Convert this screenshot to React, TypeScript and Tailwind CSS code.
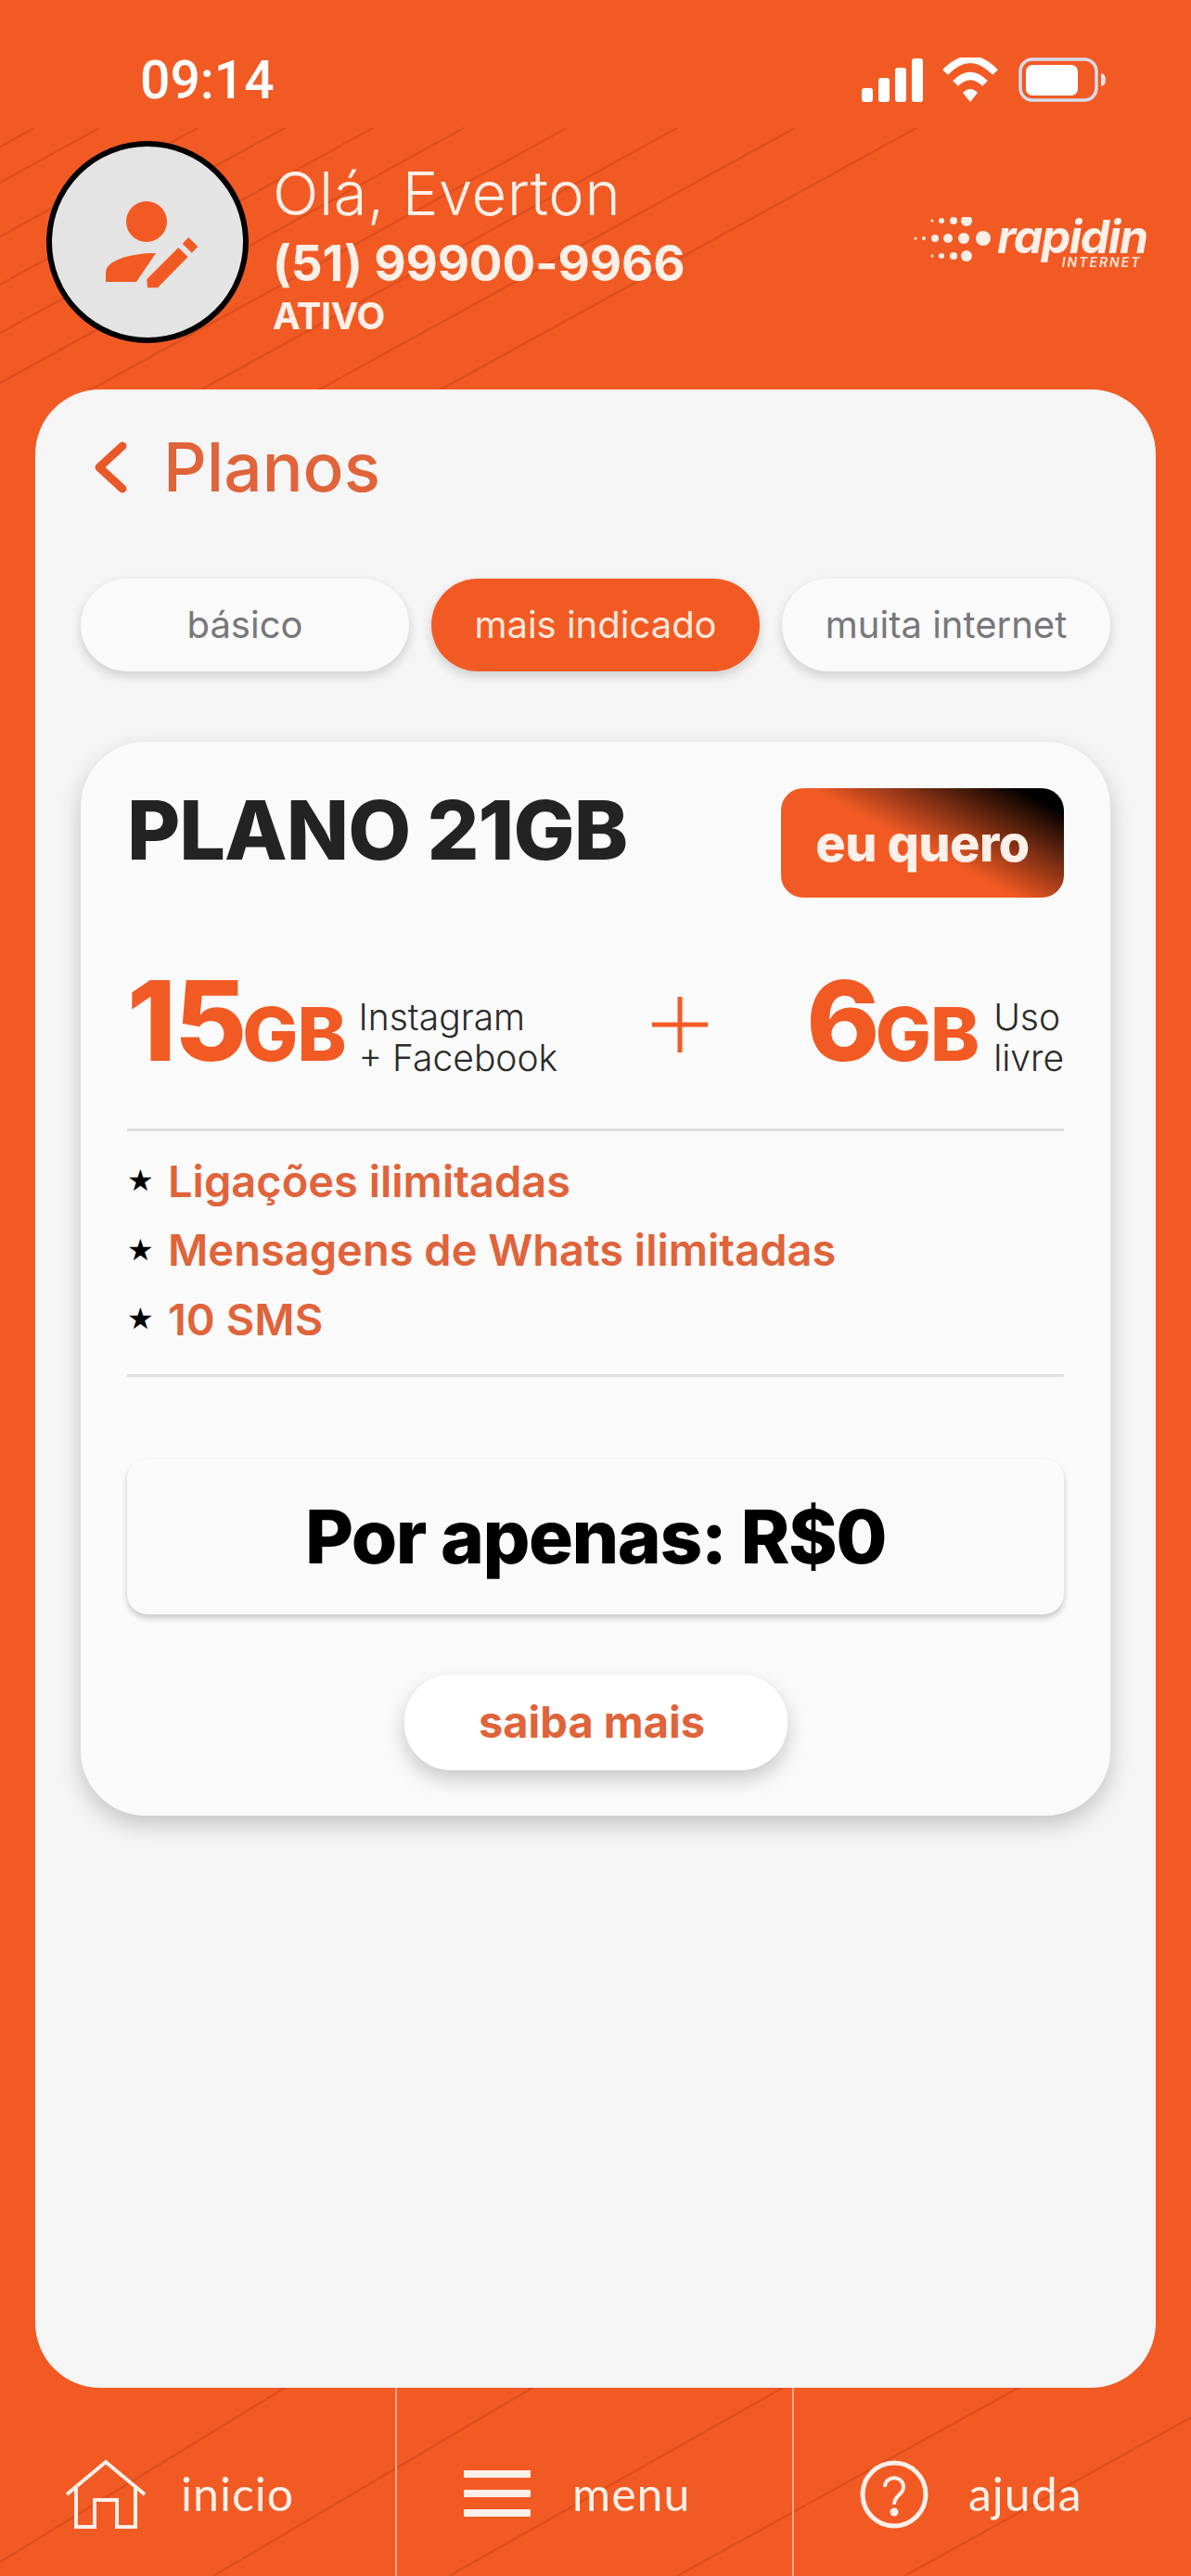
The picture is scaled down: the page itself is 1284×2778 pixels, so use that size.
const font = "font-['Inter','Liberation_Sans',sans-serif]";

const headerLines = [37, 107, 213, 307, 402, 500, 611, 730, 857, 988];
const footerLines = [
  [307, 2575, 0, 2763],
  [574, 2575, 230, 2778],
  [844, 2575, 484, 2778],
  [1098, 2575, 730, 2778],
  [1284, 2607, 975, 2778],
];

function BackgroundLines() {
  return (
    <svg className="absolute inset-0" width="1284" height="2778" viewBox="0 0 1284 2778" fill="none">
      {headerLines.map((x) => (
        <line key={x} x1={x} y1={138} x2={x - 520} y2={424} stroke="#dd4f1e" strokeWidth="2.5" />
      ))}
      {footerLines.map(([x1, y1, x2, y2]) => (
        <line key={x1} x1={x1} y1={y1} x2={x2} y2={y2} stroke="#dd4f1e" strokeWidth="2.5" />
      ))}
    </svg>
  );
}

function StatusBar() {
  return (
    <div className="flex h-[138px] shrink-0 items-start justify-between pl-[151px] pr-[92px] pt-[55px]">
      <span className="font-['Roboto',sans-serif] text-[57px] font-medium leading-[64px] text-white">09:14</span>
      <svg className="mt-[7px]" width="263" height="48" viewBox="929 62 263 48" fill="none">
        <rect x="929" y="95" width="12" height="15" rx="3" fill="#fff" />
        <rect x="947" y="84" width="12" height="26" rx="3" fill="#fff" />
        <rect x="965" y="73" width="12" height="37" rx="3" fill="#fff" />
        <rect x="983" y="63" width="12" height="47" rx="3" fill="#fff" />
        <path d="M1019 78 Q1046 50 1073 78" stroke="#fff" strokeWidth="8" />
        <path d="M1030 90 Q1046 74 1062 90" stroke="#fff" strokeWidth="8" />
        <path d="M1038 100 Q1046 92 1054 100 L1046 110 Z" fill="#fff" />
        <rect x="1100" y="64" width="82" height="44" rx="13" stroke="#d6dcec" strokeWidth="3.5" />
        <rect x="1106" y="70" width="56" height="33" rx="7" fill="#fff" />
        <path d="M1187 79 Q1192 80 1192 86 Q1192 92 1187 93 Z" fill="#e8e4e4" />
      </svg>
    </div>
  );
}

function Logo() {
  const dots = [
    [1005, 238, 1.5], [1015, 238, 3], [1028, 238, 4], [1042, 238, 6],
    [987, 257, 1.5], [996, 257, 2], [1008, 257, 4], [1022, 257, 5], [1039, 257, 6], [1060, 257, 8],
    [1005, 276, 1.5], [1015, 276, 3], [1028, 276, 4], [1042, 276, 6],
  ];
  return (
    <div className="ml-auto mr-[49px] mt-[82px] flex h-[66px] w-[250px] items-start">
      <svg className="shrink-0" width="86" height="48" viewBox="985 234 86 48">
        {dots.map(([cx, cy, r]) => (
          <circle key={`${cx}-${cy}`} cx={cx} cy={cy} r={r} fill="#fdeee6" />
        ))}
      </svg>
      <div className="ml-[4px] flex flex-col items-end">
        <span className={`${font} text-[50px] font-bold italic leading-[42px] tracking-[-1.5px] text-[#fdf0e8]`}>rapidin</span>
        <span className={`${font} mr-[6px] text-[14px] font-semibold italic leading-[14px] tracking-[2px] text-[#fde4d8]`}>INTERNET</span>
      </div>
    </div>
  );
}

function Header() {
  return (
    <div className="relative flex h-[282px] shrink-0 pl-[50px] pt-[14px]">
      <div className="flex h-[218px] w-[218px] shrink-0 items-center justify-center rounded-full border-[6px] border-black bg-[#e4e4e4]">
        <svg className="ml-[9px] mt-[6px]" width="117" height="94" viewBox="105 216 117 94" fill="#f25a24">
          <circle cx="158" cy="238" r="22" />
          <path d="M114 303 L147 303 L168 272 C140 272 114 280 114 293 Z" />
          <path d="M158.3 300 L192.3 266 L202.7 276 L170 309.3 L159 309.3 Z" />
          <path d="M196.7 261.7 L203.3 255 L213.3 265 L206.7 271.7 Z" />
        </svg>
      </div>
      <div className={`${font} ml-[26px] flex flex-col text-[#fdf0e8]`}>
        <span className="mt-[22px] text-[65px] font-light leading-[70px] tracking-[0.6px]">Olá, Everton</span>
        <span className="mt-[11px] text-[53px] font-bold leading-[58px] tracking-[-0.2px]">(51) 99900-9966</span>
        <span className="mt-[7px] text-[40px] font-bold leading-[42px] tracking-[-0.5px]">ATIVO</span>
      </div>
      <Logo />
    </div>
  );
}

function Tab({ label, active }: { label: string; active?: boolean }) {
  return (
    <div
      className={`flex h-[100px] w-[354px] items-center justify-center rounded-full text-[40px] shadow-[0_5px_12px_rgba(0,0,0,0.16)] ${
        active ? "bg-[#f25a24] text-[#fde8dc]" : "bg-[#fafafa] text-[#77777a]"
      }`}
    >
      {label}
    </div>
  );
}

function Amount({ value, unit }: { value: string; unit: string }) {
  return (
    <div className="flex items-baseline font-extrabold text-[#f25a24]">
      <span className="mr-[-3px] text-[120px] leading-[116px] tracking-[-2px]">{value}</span>
      <span className="text-[80px] leading-[116px] tracking-[-1px]">{unit}</span>
    </div>
  );
}

function Benefit({ children }: { children: string }) {
  return (
    <div className="flex h-[74.5px] items-center">
      <span className="w-[44px] font-['DejaVu_Sans',sans-serif] text-[32px] leading-none text-black">★</span>
      <span className="text-[47px] font-semibold leading-none text-[#e0633a]">{children}</span>
    </div>
  );
}

function PlanCard() {
  return (
    <div className="ml-[49px] h-[1158px] w-[1110px] rounded-[70px] bg-[#fafafa] px-[50px] pt-[50px] shadow-[0_10px_24px_rgba(0,0,0,0.2)]">
      <div className="flex h-[118px] items-start justify-between">
        <span className="mt-[-5px] text-[88px] font-extrabold leading-[100px] tracking-[-1px] text-[#232323]">PLANO 21GB</span>
        <div className="flex h-[118px] w-[305px] items-center justify-center rounded-[24px] bg-[linear-gradient(208deg,#000_9%,#f25a24_52%)] text-[54px] font-extrabold tracking-[-0.5px] text-[#fdf0e8]">
          eu quero
        </div>
      </div>

      <div className="mt-[82px] flex h-[116px] items-center">
        <Amount value="15" unit="GB" />
        <div className="ml-[14px] mt-[22px] text-[39px] font-light leading-[44px] text-[#2a2a2a]">
          <div>Instagram</div>
          <div>+ Facebook</div>
        </div>
        <svg className="ml-[100px] mt-[-6px]" width="64" height="64" viewBox="0 0 64 64" stroke="#f25a24" strokeWidth="5">
          <path d="M32 2V62M2 32H62" />
        </svg>
        <div className="ml-auto flex items-center">
          <Amount value="6" unit="GB" />
          <div className="ml-[16px] mt-[22px] text-[39px] font-light leading-[44px] text-[#2a2a2a]">
            <div>Uso</div>
            <div>livre</div>
          </div>
        </div>
      </div>

      <div className="mt-[51px] h-[3px] bg-[#dfdfdf]" />
      <div className="pb-[22px] pt-[16px]">
        <Benefit>Ligações ilimitadas</Benefit>
        <Benefit>Mensagens de Whats ilimitadas</Benefit>
        <Benefit>10 SMS</Benefit>
      </div>
      <div className="h-[3px] bg-[#dfdfdf]" />

      <div className="mt-[88px] flex h-[168px] items-center justify-center rounded-[22px] bg-[#fafafa] text-[80px] font-extrabold tracking-[-1.5px] text-black shadow-[0_4px_6px_rgba(0,0,0,0.2)]">
        Por apenas: R$0
      </div>
      <div className="mx-auto mt-[65px] flex h-[103px] w-[413px] items-center justify-center rounded-[50px] bg-white pr-[8px] text-[47px] font-bold text-[#e0633a] shadow-[0_10px_22px_rgba(0,0,0,0.2)]">
        saiba mais
      </div>
    </div>
  );
}

function Panel() {
  return (
    <main className={`${font} relative mx-[38px] flex-1 rounded-[70px] bg-[#f5f5f5]`}>
      <div className="flex h-[204px] items-start pl-[62px] pt-[46px]">
        <svg className="mt-[10px]" width="38" height="56" viewBox="0 0 38 56" fill="none" stroke="#e8592a" strokeWidth="9" strokeLinecap="round" strokeLinejoin="round">
          <path d="M32 5L7 28L32 51" />
        </svg>
        <span className="ml-[38px] text-[73px] font-medium leading-[76px] text-[#e0633a]">Planos</span>
      </div>
      <div className="flex gap-[24px] pl-[49px]">
        <Tab label="básico" />
        <Tab label="mais indicado" active />
        <Tab label="muita internet" />
      </div>
      <div className="mt-[76px]">
        <PlanCard />
      </div>
    </main>
  );
}

function NavItem({ label, width, icon, gap, left }: { label: string; width: string; icon: React.ReactNode; gap: string; left: string }) {
  return (
    <div className={`flex h-full items-center pt-[28px] ${width} ${left} first:border-l-0 border-l-2 border-[#f9a98c]`}>
      {icon}
      <span className={`${gap} mt-[-4px] font-['Lato',sans-serif] text-[50px] leading-none tracking-[1px] text-[#fdf0e8]`}>{label}</span>
    </div>
  );
}

function BottomNav() {
  return (
    <nav className="relative flex h-[203px] shrink-0">
      <NavItem
        label="inicio"
        width="w-[426px]"
        left="pl-[70px]"
        gap="ml-[37px]"
        icon={
          <svg className="mt-[-2px]" width="88" height="76" viewBox="0 0 88 76" fill="none" stroke="#fdf0e8" strokeWidth="4">
            <path d="M2 38L44 3L86 38" />
            <path d="M12 31V73H32V44H56V73H76V31" />
          </svg>
        }
      />
      <NavItem
        label="menu"
        width="w-[428px]"
        left="pl-[72px]"
        gap="ml-[45px]"
        icon={
          <svg className="mt-[-4px]" width="72" height="50" viewBox="0 0 72 50" fill="#fdf0e8">
            <rect y="0" width="72" height="8" rx="1" />
            <rect y="21" width="72" height="8" rx="1" />
            <rect y="42" width="72" height="8" rx="1" />
          </svg>
        }
      />
      <NavItem
        label="ajuda"
        width="w-[430px]"
        left="pl-[71px]"
        gap="ml-[43px]"
        icon={
          <svg className="mt-[-2px]" width="74" height="76" viewBox="0 0 74 76" fill="none" stroke="#fdf0e8" strokeWidth="5">
            <circle cx="37" cy="38" r="34" />
            <path d="M27 30C27 17 47 17 47 30C47 39 37 38 37 49" strokeWidth="4" />
            <circle cx="37" cy="57" r="2" fill="#fdf0e8" />
          </svg>
        }
      />
    </nav>
  );
}

export default function App() {
  return (
    <div className="relative flex h-[2778px] w-[1284px] flex-col overflow-hidden bg-[#f25a24]">
      <BackgroundLines />
      <div className="relative flex flex-1 flex-col">
        <StatusBar />
        <Header />
        <Panel />
        <BottomNav />
      </div>
    </div>
  );
}
